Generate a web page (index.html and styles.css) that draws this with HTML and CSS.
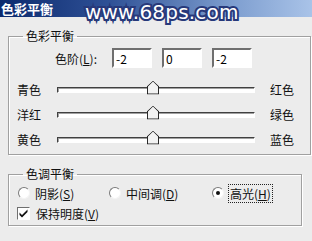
FILE: index.html
```html
<!DOCTYPE html>
<html lang="zh">
<head>
    <meta charset="UTF-8">
    <link rel="stylesheet" href="styles.css">
</head>
<body>
    <div class="titlebar">
        <span class="title">色彩平衡</span>
        <span class="watermark">www.68ps.com</span>
    </div>

    <fieldset class="group balance">
        <legend>色彩平衡</legend>
        <div class="levels">
            <span class="levels-label">色阶(<u>L</u>):</span>
            <input class="num" type="text" value="-2">
            <input class="num" type="text" value="0">
            <input class="num" type="text" value="-2">
        </div>
        <div class="sliders">
            <div class="slider-row">
                <span class="side">青色</span>
                <div class="track"><span class="thumb"></span></div>
                <span class="side right">红色</span>
            </div>
            <div class="slider-row">
                <span class="side">洋红</span>
                <div class="track"><span class="thumb"></span></div>
                <span class="side right">绿色</span>
            </div>
            <div class="slider-row">
                <span class="side">黄色</span>
                <div class="track"><span class="thumb"></span></div>
                <span class="side right">蓝色</span>
            </div>
        </div>
    </fieldset>

    <fieldset class="group tone">
        <legend>色调平衡</legend>
        <div class="radios">
            <label class="opt shadows"><span class="radio"></span>阴影(<u>S</u>)</label>
            <label class="opt mids"><span class="radio"></span>中间调(<u>D</u>)</label>
            <label class="opt highs"><span class="radio on"></span><span class="focus">高光(<u>H</u>)</span></label>
        </div>
        <label class="opt keep"><span class="check">
            <svg width="9" height="9" viewBox="0 0 9 9"><path d="M0.5 3.5 L3 6 L8.5 0.5 L8.5 3 L3 8.5 L0.5 6 Z" fill="#111"/></svg>
        </span>保持明度(<u>V</u>)</label>
    </fieldset>
</body>
</html>
```

FILE: styles.css
```css
body {
    margin: 0;
    width: 312px;
    height: 241px;
    overflow: hidden;
    background-color: #ececec;
    font-family: "Noto Sans CJK SC", "Liberation Sans", sans-serif;
    font-size: 12px;
    color: #111;
}

.titlebar {
    position: relative;
    height: 17px;
    background: linear-gradient(to right, #0c2a6e 0%, #2f5196 35%, #7f9fd0 75%, #a9c3e8 100%);
}

.title {
    display: block;
    color: #fff;
    font-weight: bold;
    font-size: 13px;
    line-height: 17px;
    padding-left: 1px;
}

.watermark {
    position: absolute;
    left: 85px;
    top: 2px;
    font-family: "DejaVu Sans", sans-serif;
    font-size: 20px;
    line-height: 20px;
    letter-spacing: 0.2px;
    color: #fff;
    -webkit-text-stroke: 4px #27397a;
    paint-order: stroke fill;
}

.group {
    margin: 12px 10px 0 8px;
    padding: 0;
    border: 1px solid #a0a0a0;
    box-shadow: 1px 1px 0 #fff, inset 1px 1px 0 #fff;
}

.group legend {
    margin-left: 14px;
    padding: 0 3px;
    line-height: 14px;
}

.levels {
    display: flex;
    align-items: center;
    margin: 5px 0 0 46px;
    height: 20px;
}

.levels-label {
    width: 57px;
}

.num {
    width: 40px;
    height: 20px;
    box-sizing: border-box;
    margin: 0 10px 0 0;
    padding: 1px 2px 0;
    font: inherit;
    border: 2px solid;
    border-color: #6f6f6f #fff #fff #6f6f6f;
    background: #fff;
    outline: none;
}

.sliders {
    margin: 9px 0 0 8px;
    padding-bottom: 2px;
}

.slider-row {
    display: flex;
    align-items: center;
    height: 25px;
}

.side {
    width: 40px;
}

.side.right {
    margin-left: 15px;
}

.track {
    position: relative;
    width: 196px;
    height: 4px;
    border: 1px solid;
    border-color: #404040 #fff #fff #404040;
    background: #fff;
    box-shadow: inset 1px 1px 0 #a0a0a0;
}

.thumb {
    position: absolute;
    left: 89px;
    top: -7px;
    width: 12px;
    height: 14px;
    background: #f2f2f2;
    clip-path: polygon(50% 0, 100% 40%, 100% 100%, 0 100%, 0 40%);
}

.thumb::before {
    content: "";
    position: absolute;
    inset: 0;
    background: #222;
    clip-path: polygon(50% 0, 100% 40%, 100% 100%, 0 100%, 0 40%, 8% 42%, 8% 92%, 92% 92%, 92% 42%, 50% 8%, 8% 42%, 0 40%);
}

.tone {
    margin-top: 12px;
    padding-bottom: 3px;
}

.radios {
    display: flex;
    margin: 2px 0 0 9px;
    height: 20px;
    align-items: center;
}

.opt {
    display: flex;
    align-items: center;
}

.shadows {
    width: 91px;
}

.mids {
    width: 103px;
}

.radio {
    width: 10px;
    height: 10px;
    margin-right: 5px;
    border-radius: 50%;
    background: #fff;
    border: 1px solid;
    border-color: #7a7a7a #f4f4f4 #f4f4f4 #7a7a7a;
    position: relative;
}

.radio.on::after {
    content: "";
    position: absolute;
    left: 3px;
    top: 3px;
    width: 4px;
    height: 4px;
    border-radius: 50%;
    background: #111;
}

.focus {
    outline: 1px dotted #222;
    padding: 0 1px;
}

.keep {
    margin: 2px 0 0 8px;
}

.check {
    display: flex;
    align-items: center;
    justify-content: center;
    width: 11px;
    height: 11px;
    margin-right: 6px;
    background: #fff;
    border: 1px solid;
    border-color: #6f6f6f #fff #fff #6f6f6f;
}
```
